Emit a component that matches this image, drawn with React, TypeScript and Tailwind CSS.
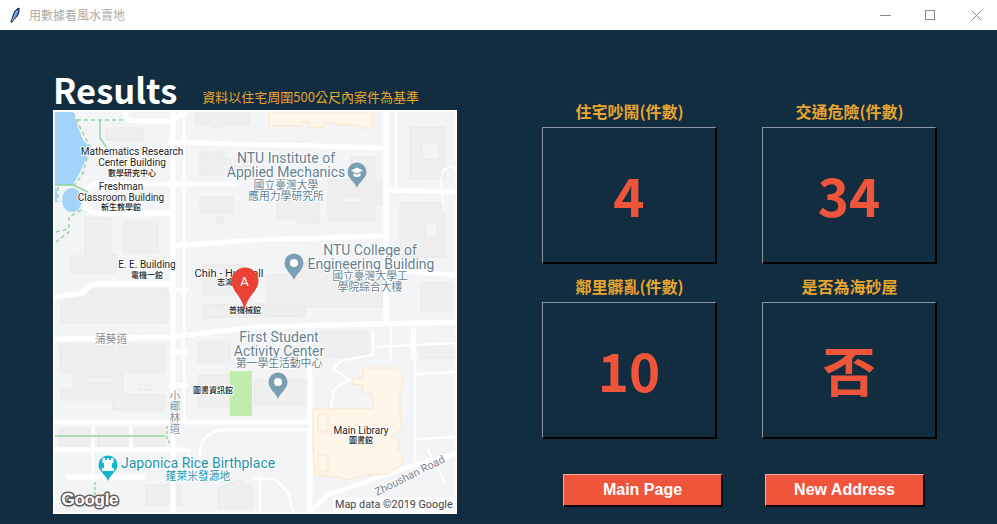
const stats = [
  { label: '住宅吵鬧(件數)', value: '4' },
  { label: '交通危險(件數)', value: '34' },
  { label: '鄰里髒亂(件數)', value: '10' },
  { label: '是否為海砂屋', value: '否' },
]

const buildings = [
  '53,18 90,18 90,30 53,30',
  '143,3 197,3 197,15 170,15 170,17 160,17 160,15 143,15',
  '147,42 171,42 171,49 178,49 178,60 170,60 170,65 147,65',
  '147,87 180,87 180,103 147,103',
  '163,107 171,107 171,113 163,113',
  '70,112 105,112 105,142 70,142',
  '32,108 58,108 58,145 63,145 63,163 18,163 18,146 32,146',
  '8,185 30,185 40,178 115,178 115,213 8,213',
  '7,234 50,234 50,237 60,237 60,234 112,234 112,262 70,262 70,285 112,285 112,300 60,300 60,290 8,290 8,280 20,280 20,263 8,263',
  '150,195 252,193 252,206 150,208',
  '150,155 190,155 190,185 150,185',
  '215,165 235,165 235,153 300,153 300,162 329,162 329,197 215,197',
  '298,47 322,47 322,70 328,70 328,95 322,95 322,110 275,110 275,70 298,70',
  '224,90 266,90 266,113 245,113 245,108 224,108',
  '182,50 202,50 202,62 190,62 190,65 182,65',
  '357,17 392,17 392,69 357,69',
  '347,93 392,93 392,147 347,147',
  '368,173 398,173 398,201 368,201',
  '145,232 177,232 177,252 145,252',
  '145,265 177,265 177,297 145,297',
  '202,270 255,270 255,295 202,295',
  '259,222 315,222 315,247 259,247',
  '367,234 404,234 404,248 367,248',
  '93,375 128,375 128,395 93,395',
  '165,378 186,370 200,378 200,398 165,398',
  '7,319 36,319 36,336 7,336',
  '45,319 74,319 74,336 45,336',
  '82,319 112,319 112,336 82,336',
]

function Pin({ x, y }: { x: number; y: number }) {
  return (
    <g>
      <path d={`M${x} ${y + 17}C${x - 2} ${y + 11} ${x - 9.5} ${y + 7} ${x - 9.5} ${y}a9.5 9.5 0 0 1 19 0C${x + 9.5} ${y + 7} ${x + 2} ${y + 11} ${x} ${y + 17}z`} fill="#7a9eb3" />
      <circle cx={x} cy={y} r="4" fill="#fff" />
    </g>
  )
}

function MapImage() {
  const halo = { paintOrder: 'stroke', stroke: '#fff', strokeWidth: 2, strokeLinejoin: 'round' as const }
  const roboto = 'Roboto, sans-serif'
  const cjk = '"Noto Sans CJK TC", sans-serif'
  return (
    <svg viewBox="0 0 404 404" className="block h-[404px] w-[404px] bg-[#f3f4f6]">
      {buildings.map(p => (
        <polygon key={p} points={p} fill="#efefef" stroke="#e8e8e9" strokeWidth="1" />
      ))}
      <rect x="369" y="33" width="17" height="16" fill="#f3f4f6" stroke="#e8e8e9" />
      <rect x="372" y="113" width="12" height="15" fill="#f3f4f6" stroke="#e8e8e9" />
      <rect x="290" y="86" width="18" height="7" fill="#f3f4f6" stroke="#e8e8e9" />
      <rect x="33" y="267" width="28" height="6" fill="#f3f4f6" stroke="#e8e8e9" />
      <rect x="86" y="275" width="12" height="5" fill="#f3f4f6" stroke="#e8e8e9" />

      {/* roads */}
      <g fill="none" stroke="#fff" strokeLinecap="round" strokeLinejoin="round">
        <g strokeWidth="5">
          <path d="M120 0V404" />
          <path d="M72 2Q72 11 82 11H118L133 2" />
          <path d="M118 32L332 38" />
          <path d="M335 80L404 82" />
          <path d="M183 74H45Q31 75 31 89Q32 103 45 103H118" />
          <path d="M120 136L202 130L332 126" />
          <path d="M335 160L404 165" />
          <path d="M2 187L30 183Q36 175 44 174H118" />
          <path d="M2 229L118 227L202 217L404 212" />
          <path d="M2 312H257" />
          <path d="M2 340H132" />
          <path d="M15 367H90" />
          <path d="M257 222V404" />
          <path d="M333 0V212" />
          <path d="M260 399L275 385L349 359L404 343" />
          <path d="M118 180H133M118 242H133M118 275H133" />
        </g>
        <g strokeWidth="2.500">
          <path d="M131 0V312" />
          <path d="M343 0V80" />
          <path d="M40 312V370" />
          <path d="M78 312V340" />
          <path d="M136 340V367" />
          <path d="M147 350Q145 322 170 320H258" />
          <path d="M202 369H222L235 382L240 404" />
          <path d="M320 245L290 250Q278 258 282 260L297 270Q282 276 280 282L278 299" />
          <path d="M320 222V245M362 220V355M362 264L404 262M362 329L404 327" />
          <path d="M320 237L404 233M338 218V248M359 218V248" />
          <path d="M392 58Q384 70 392 100M392 60Q398 52 404 62" strokeWidth="1.500" />
          <path d="M375 340L392 372M362 355L385 348" />
          <path d="M207 367V404" />
          <path d="M2 392H35" />
        </g>
      </g>

      {/* water and park */}
      <path d="M2 2H20L25 17L30 30L37 37L35 45L28 60L20 75H2Z" fill="#a4d3fa" />
      <ellipse cx="19" cy="90" rx="10" ry="12" fill="#a4d3fa" />
      <rect x="2" y="78" width="2" height="14" fill="#a4d3fa" />
      <rect x="177" y="261" width="22" height="45" fill="#c0ecae" />
      <polygon points="216,2 319,2 319,18 306,18 306,15 283,15 283,13 270,13 270,17 256,17 256,12 248,12 248,16 216,16" fill="#fff6ea" stroke="#fde4c8" />
      <polygon points="310,258 344,258 350,265 350,274 347,277 347,302 349,319 337,327 347,330 345,339 350,345 349,355 335,364 312,365 295,370 284,367 262,365 260,335 260,299 320,299 320,284 310,282 310,275 300,274 300,269 310,268" fill="#fff6ea" stroke="#fde4c8" />
      <rect x="265" y="304" width="10" height="18" fill="#fff6ea" stroke="#fde4c8" />
      <rect x="265" y="345" width="10" height="17" fill="#fff6ea" stroke="#fde4c8" />

      {/* footpaths */}
      <g fill="none" stroke="#93d69f" strokeWidth="1.500">
        <path d="M20 3L37 37L30 63L20 78" strokeDasharray="4 3" />
        <path d="M24 10H70" strokeDasharray="4 3" />
        <path d="M47 10V28L58 44" />
        <path d="M58 40H88" strokeDasharray="4 3" />
        <path d="M2 75H20L35 82" />
        <path d="M28 100L16 107V122L3 132" strokeDasharray="4 3" />
        <path d="M3 122L15 119" strokeDasharray="4 3" />
        <path d="M5 77V92" strokeDasharray="4 3" />
        <path d="M2 326H112" />
        <path d="M114 316V328L117 334" strokeDasharray="3 2" />
        <path d="M42 372V386" strokeDasharray="3 2" />
      </g>

      {/* labels */}
      <g fontFamily={roboto} fontSize="10" fill="#222" textAnchor="middle" style={halo}>
        <text x="79" y="45">Mathematics Research</text>
        <text x="79" y="56">Center Building</text>
        <text x="68" y="80">Freshman</text>
        <text x="68" y="91">Classroom Building</text>
        <text x="94" y="158">E. E. Building</text>
        <text x="176" y="167" fontSize="11">Chih - Hui Hall</text>
        <text x="308" y="324">Main Library</text>
      </g>
      <g fontFamily={cjk} fontSize="8" fontWeight="500" fill="#222" textAnchor="middle" style={halo}>
        <text x="79" y="65.5">數學研究中心</text>
        <text x="68" y="100">新生教學館</text>
        <text x="94" y="168">電機一館</text>
        <text x="176" y="175">志鴻館</text>
        <text x="192" y="203">普機械館</text>
        <text x="160" y="283">圖書資訊館</text>
        <text x="308" y="333">圖書館</text>
      </g>
      <g fontFamily={roboto} fontSize="14" fill="#647f92" textAnchor="middle" style={halo}>
        <text x="233" y="53">NTU Institute of</text>
        <text x="233" y="67">Applied Mechanics</text>
        <text x="317" y="145">NTU College of</text>
        <text x="318" y="158.5">Engineering Building</text>
        <text x="226" y="232">First Student</text>
        <text x="226" y="246">Activity Center</text>
      </g>
      <g fontFamily={cjk} fontSize="10.8" fill="#647f92" textAnchor="middle" style={halo}>
        <text x="233" y="79">國立臺灣大學</text>
        <text x="233" y="90">應用力學研究所</text>
        <text x="317" y="170">國立臺灣大學工</text>
        <text x="317" y="181">學院綜合大樓</text>
        <text x="226" y="257">第一學生活動中心</text>
      </g>
      <g fontFamily={cjk} fontSize="10.8" fill="#8b9095" textAnchor="middle" style={halo}>
        <text x="58" y="233">蒲葵道</text>
        <text x="122" y="290">小</text>
        <text x="122" y="301">椰</text>
        <text x="122" y="312">林</text>
        <text x="122" y="323">道</text>
      </g>
      <text x="68" y="358" fontFamily={roboto} fontSize="14" fill="#1c93a8" style={halo}>Japonica Rice Birthplace</text>
      <text x="145" y="370" fontFamily={cjk} fontSize="10.8" fill="#1c93a8" textAnchor="middle" style={halo}>蓬萊米發源地</text>
      <text x="324" y="386" transform="rotate(-26.5 324 386)" fontFamily={roboto} fontSize="11" fill="#7d8389" style={halo}>Zhoushan Road</text>

      {/* pins */}
      <path d="M304 78C302 72 294.500 68 294.500 62a9.500 9.500 0 0 1 19 0C313.500 68 306 72 304 78z" fill="#7a9eb3" />
      <path d="M298 60.500L304 57.500L310 60.500L304 63.500zM300.500 63V66Q304 68 307.500 66V63L304 65z" fill="#fff" />
      <Pin x={241} y={153} />
      <Pin x={225} y={272} />
      <path d="M55 371C53 365 45.500 361 45.500 355a9.500 9.500 0 0 1 19 0C64.500 361 57 365 55 371z" fill="#13b5cb" />
      <path d="M49.500 348H52V350H54V348H56V350H58V348H60.500V353H59V358H61V361H49V358H51V353H49.500z" fill="#fff" />
      <path d="M191.500 200C189 186 178.500 181 178.500 171a13.500 13.500 0 0 1 27 0C205.500 181 194 186 191.500 200z" fill="#ea4335" />
      <text x="191.500" y="176" fontFamily={roboto} fontSize="13" fill="#fff" textAnchor="middle">A</text>

      {/* attribution */}
      <text x="8.500" y="395" fontFamily='"Liberation Sans", sans-serif' fontSize="17" fontWeight="700" letterSpacing="-0.3" fill="#fff" stroke="#5f5f5f" strokeWidth="3" strokeLinejoin="round" style={{ paintOrder: 'stroke' }}>Google</text>
      <rect x="280" y="387" width="122" height="15" fill="#fff" fillOpacity="0.75" />
      <text x="282" y="398" fontFamily={roboto} fontSize="10.8" fill="#444">Map data ©2019 Google</text>
      <rect x="0.500" y="0.500" width="403" height="403" fill="none" stroke="#fff" strokeWidth="2" />
    </svg>
  )
}

function Feather() {
  return (
    <svg viewBox="0 0 16 16" className="h-4 w-4">
      <path d="M4 15L6 9C7 5 9 2 12 1C12.500 5 11 10 7 12L5 15z" fill="#3f7fd6" stroke="#111" strokeWidth="1" />
      <path d="M5 14L10 4" stroke="#cfe0f7" strokeWidth="0.8" />
    </svg>
  )
}

function TitleBar() {
  return (
    <div className="flex h-[30px] items-center bg-white pl-[7px]">
      <Feather />
      <span className="ml-[6px] text-[12px] text-[#a9a9a9]">用數據看風水賣地</span>
      <div className="ml-auto flex items-center">
        <svg viewBox="0 0 11 11" className="mr-[34px] h-[11px] w-[11px]"><path d="M0 5.500H11" stroke="#8a8a8a" /></svg>
        <svg viewBox="0 0 11 11" className="mr-[35px] h-[11px] w-[11px]"><rect x="0.500" y="0.500" width="9" height="9" fill="none" stroke="#8a8a8a" /></svg>
        <svg viewBox="0 0 11 11" className="mr-[15px] h-[11px] w-[11px]"><path d="M0.500 0.500L10.500 10.500M10.500 0.500L0.500 10.500" stroke="#8a8a8a" /></svg>
      </div>
    </div>
  )
}

function ActionButton({ children }: { children: string }) {
  return (
    <button className="flex h-[33px] w-[160px] items-center justify-center border-t border-l border-t-[#f9a899] border-l-[#f9a899] border-r-2 border-b-2 border-r-black border-b-black bg-[#ef553b] font-['Liberation_Sans',sans-serif] text-[16px] font-bold text-white">
      {children}
    </button>
  )
}

export default function App() {
  return (
    <div className="flex h-[524px] w-[997px] flex-col overflow-hidden bg-[#122d40] font-['Noto_Sans_CJK_TC',sans-serif]">
      <TitleBar />
      <div className="flex pl-[53px]">
        <div className="w-[404px]">
          <div className="flex h-[80px] items-end">
            <h1 className="text-[34.500px] leading-[41px] font-bold text-white">Results</h1>
            <span className="mb-[3px] ml-[25px] text-[13px] leading-[20px] text-[#e8a52f]">資料以住宅周圍500公尺內案件為基準</span>
          </div>
          <MapImage />
        </div>
        <div className="ml-[85px] pt-[73px]">
          <div className="grid grid-cols-[175px_175px] gap-x-[45px] gap-y-[14px]">
            {stats.map(s => (
              <div key={s.label}>
                <div className="h-[24px] text-center text-[16px] leading-[16px] font-bold text-[#e8a52f]">{s.label}</div>
                <div className="flex h-[137px] items-center justify-center border-t border-l border-t-[#8a96a0] border-l-[#8a96a0] border-r-2 border-b-2 border-r-black border-b-black text-[53px] font-bold text-[#ef553b]">
                  {s.value}
                </div>
              </div>
            ))}
          </div>
          <div className="mt-[35px] ml-[21px] flex gap-[42px]">
            <ActionButton>Main Page</ActionButton>
            <ActionButton>New Address</ActionButton>
          </div>
        </div>
      </div>
    </div>
  )
}
